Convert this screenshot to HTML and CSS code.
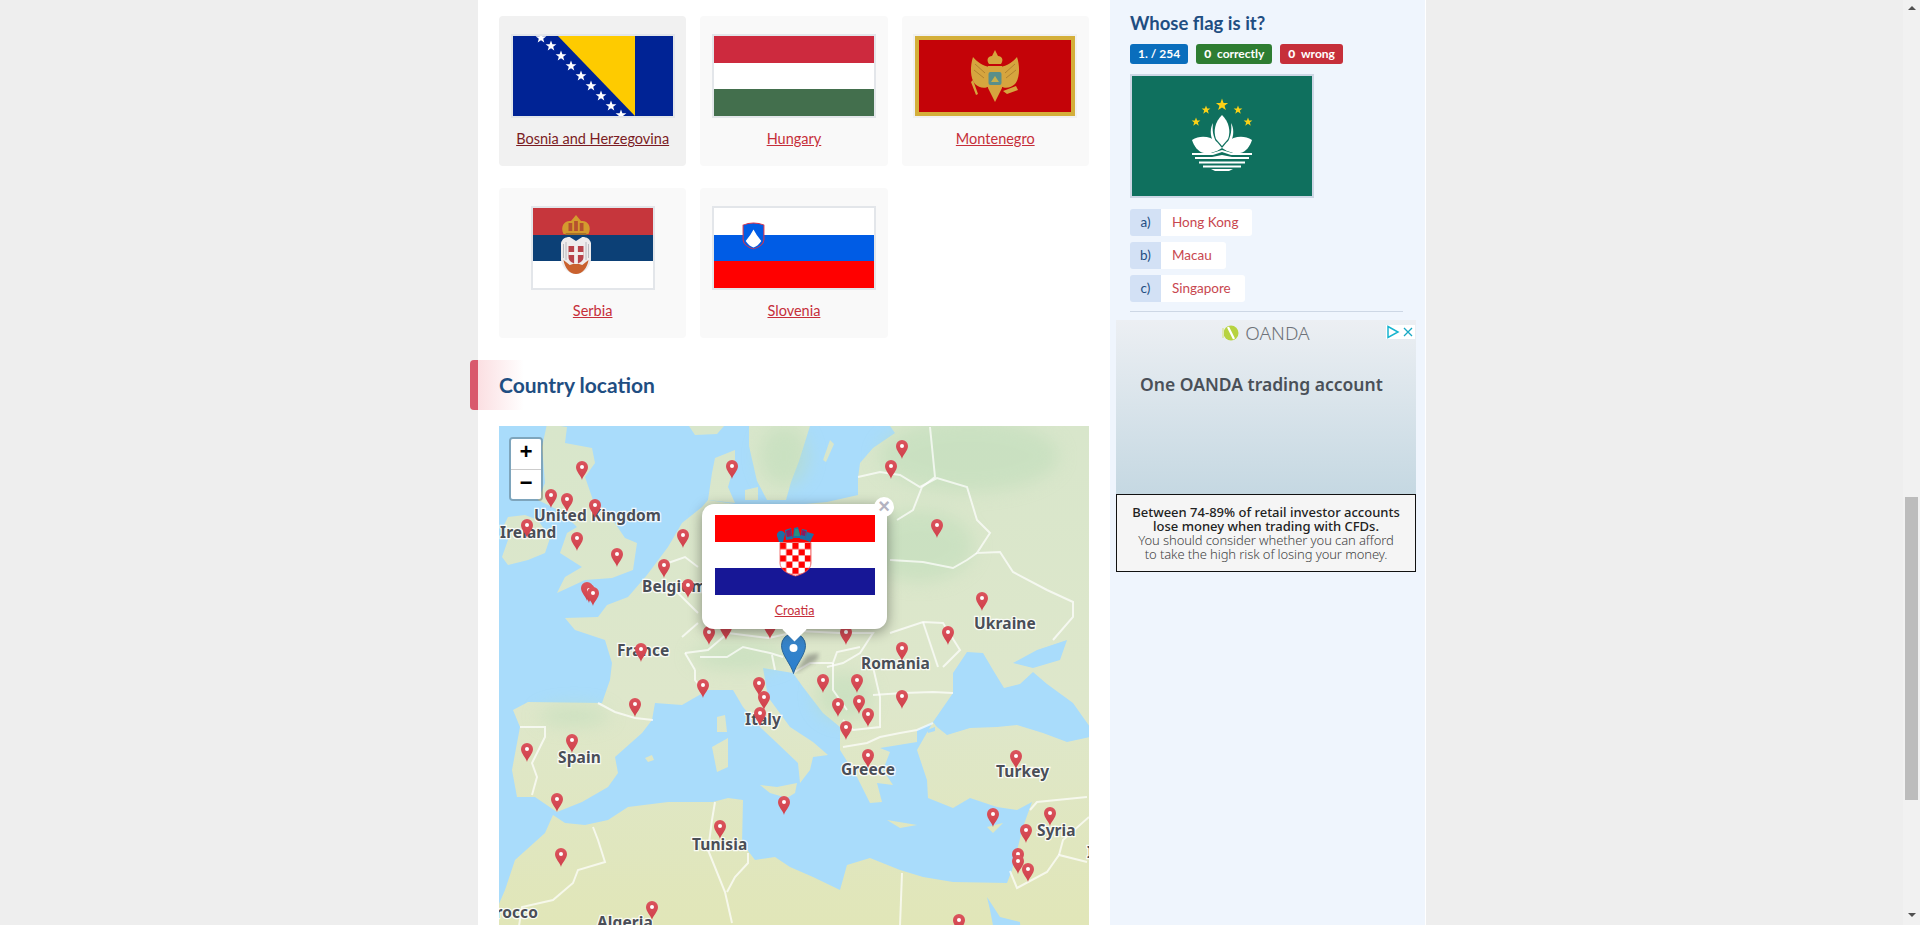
FILE: index.html
```html
<!DOCTYPE html>
<html lang="en">
<head>
  <meta charset="UTF-8" />
  <title>Countries of Southern Europe</title>
  <link rel="stylesheet" href="styles.css">
</head>
<body>
  <div class="page">
    <div class="wrap">
      <main class="content">
        <div class="flag-grid">
          <div class="flag-card hover">
            <svg class="flag" width="160" height="80" viewBox="0 0 160 80">
              <defs>
                <path id="star" d="M0-5.600 1.400-1.800 5.400-1.700 2.200.7 3.300 4.600 0 2.300-3.300 4.600-2.200.7-5.400-1.700-1.400-1.800Z" fill="#fff"/>
              </defs>
              <rect width="160" height="80" fill="#002395"/>
              <path d="M45 0H122V80Z" fill="#fecb00"/>
              <use href="#star" x="28" y="2"/><use href="#star" x="38" y="10"/><use href="#star" x="48" y="20"/>
              <use href="#star" x="58" y="30"/><use href="#star" x="68" y="40"/><use href="#star" x="78" y="50"/>
              <use href="#star" x="88" y="60"/><use href="#star" x="98" y="70"/><use href="#star" x="108" y="79"/>
            </svg>
            <a href="#">Bosnia and Herzegovina</a>
          </div>
          <div class="flag-card">
            <svg class="flag" width="160" height="80" viewBox="0 0 160 80">
              <rect width="160" height="27" fill="#cd2a3e"/>
              <rect y="27" width="160" height="26" fill="#fff"/>
              <rect y="53" width="160" height="27" fill="#436f4d"/>
            </svg>
            <a href="#">Hungary</a>
          </div>
          <div class="flag-card">
            <svg class="flag plain" width="160" height="80" viewBox="0 0 160 80">
              <rect width="160" height="80" fill="#d4af3a"/>
              <rect x="4" y="4" width="152" height="72" fill="#c40308"/>
              <g fill="#d6a53e">
                <path d="M75 31C68 30 62 26 58 21 55 30 55 42 60 48 64 52 70 53 75 50Z"/>
                <path d="M85 31C92 30 98 26 102 21 105 30 105 42 100 48 96 52 90 53 85 50Z"/>
                <path d="M73 30H87V52L80 66 73 52Z"/>
                <path d="M74 28C71 24 73 20 77 20L80 14 83 20C87 20 89 24 86 28Z"/>
                <path d="M58 44 63 58 61 59 56 46ZM88 55 101 50 103 54 92 58Z"/>
              </g>
              <path d="M60 28 70 37M59 34 69 42M100 28 90 37M101 34 91 42" stroke="#a8772a" stroke-width=".8"/>
              <rect x="73.500" y="36" width="13" height="13" rx="2" fill="#5a8f8a"/>
              <path d="M76 46 80 40 84 46Z" fill="#c9b04a"/>
            </svg>
            <a href="#">Montenegro</a>
          </div>
          <div class="flag-card">
            <svg class="flag" width="120" height="80" viewBox="0 0 120 80">
              <rect width="120" height="27" fill="#c6363c"/>
              <rect y="27" width="120" height="26" fill="#0c4076"/>
              <rect y="53" width="120" height="27" fill="#fff"/>
              <g transform="translate(-.75 0) scale(1.250 1)">
                <path d="M25 26C22 18 26 12 31 13L35 7 39 13C44 12 48 18 45 26Z" fill="#d49a2e"/>
                <path d="M29 15H32V23H29ZM33.500 13H36.500V23H33.500ZM38 15H41V23H38Z" fill="#b5502f"/>
                <path d="M27 25H43L44 27H26Z" fill="#a8702a"/>
                <path d="M30 29C26 29 24 31 23 35V52C24 60 29 66 35 66 41 66 46 60 47 52V35C46 31 44 29 40 29L35 33Z" fill="#eeecec"/>
                <path d="M25 36V50M27 34V52M45 36V50M43 34V52" stroke="#b3b4ba" stroke-width=".8"/>
                <path d="M25 52C26 60 30 66 35 66 40 66 44 60 45 52L40 57 35 55 30 57Z" fill="#c9612e"/>
                <path d="M29 38H41V49C41 53 38 55 35 56 32 55 29 53 29 49Z" fill="#b8434a"/>
                <path d="M33.500 38H36.500V56H33.500ZM29 44H41V47H29Z" fill="#f1efee"/>
              </g>
            </svg>
            <a href="#">Serbia</a>
          </div>
          <div class="flag-card">
            <svg class="flag" width="160" height="80" viewBox="0 0 160 80">
              <rect width="160" height="27" fill="#fff"/>
              <rect y="27" width="160" height="26" fill="#005ce5"/>
              <rect y="53" width="160" height="27" fill="#f00"/>
              <g transform="translate(-2.750 0) scale(1.300 1)">
                <path d="M24.500 17Q32.500 13 40.500 17V32Q40 38 32.500 41 25 38 24.500 32Z" fill="#005ce5" stroke="#d8334a" stroke-width=".8"/>
                <path d="M26.500 33 30 27 32.500 21.500 35 27 38.500 33Q36 38 32.500 39.500 29 38 26.500 33Z" fill="#fff"/>
              </g>
            </svg>
            <a href="#">Slovenia</a>
          </div>
        </div>

        <h2 class="section-title">Country location</h2>

        <div class="map">
          <svg class="map-img" width="590" height="520" viewBox="0 0 590 520">
            <defs>
              <linearGradient id="land" gradientUnits="userSpaceOnUse" x1="0" y1="0" x2="0" y2="500">
                <stop offset="0" stop-color="#d8e6cb"/>
                <stop offset=".55" stop-color="#dee7cb"/>
                <stop offset="1" stop-color="#e1e6b8"/>
              </linearGradient>
              <linearGradient id="pin-red" x1="0" y1="0" x2="0" y2="1">
                <stop offset="0" stop-color="#db545d"/>
                <stop offset="1" stop-color="#cf3f4a"/>
              </linearGradient>
              <filter id="soft"><feGaussianBlur stdDeviation="9"/></filter>
              <filter id="edge"><feGaussianBlur stdDeviation=".6"/></filter>
              <g id="pin">
                <path d="M6 19C5 14.500 0 11 0 6A6 6 0 0 1 12 6C12 11 7 14.500 6 19Z" fill="url(#pin-red)"/>
                <circle cx="6" cy="6" r="2" fill="#fff"/>
              </g>
            </defs>
            <rect width="590" height="520" fill="#a9dcfb"/>

            <g fill="url(#land)" filter="url(#edge)">
              <path d="M391 0 396 7 374 22 361 37 359 52 359 69 328 76 285 80 236 78 209 74 203 81 183 97 169 121 148 149 129 171 108 179 99 191 66 192 76 204 106 214 113 237 111 254 103 277 29 276 14 284 21 301 13 344 18 371 36 371 58 386 83 376 109 361 119 347 116 331 143 307 153 294 156 277 183 279 209 264 234 264 244 281 261 301 278 317 299 337 301 357 311 344 314 331 329 329 314 316 291 301 269 271 264 242 276 244 294 247 304 261 324 287 341 301 341 324 358 351 361 357 371 377 383 376 378 357 394 359 384 344 391 326 381 322 418 316 418 304 434 296 418 324 428 354 429 372 454 382 471 372 498 381 518 384 533 376 524 401 513 444 508 457 454 456 424 451 401 444 371 432 348 439 341 464 314 451 291 441 276 431 256 434 243 417 244 374 229 372 214 376 169 376 129 381 109 394 86 399 66 397 54 389 46 407 16 434 6 464 -4 487 -4 520 600 520 600 0Z"/>
              <path d="M68 1 66 17 93 22 96 37 86 51 94 74 109 87 126 112 138 117 134 144 113 152 86 154 58 167 66 151 83 141 61 127 68 107 78 101 63 86 39 74 46 57 43 21 48 -2Z"/>
              <path d="M9 91 26 89 39 94 51 112 46 127 29 134 9 139 3 131 9 114 4 101Z"/>
              <path d="M216 32 236 24 236 37 229 61 236 77 209 74 213 47Z"/>
              <path d="M246 64 259 61 259 74 246 74Z"/>
              <path d="M250 0 311 0 300 35 292 56 287 74 268 74 258 55 250 20Z"/>
              <path d="M190 0 225 0 218 8 196 9Z"/>
              <path d="M331 14 335 18 327 36 324 34Z"/>
              <path d="M261 359 278 361 298 357 296 367 288 372 271 367Z"/>
              <path d="M213 321 229 312 229 341 218 346Z"/>
              <path d="M218 291 226 289 228 306 218 306Z"/>
              <path d="M146 332 153 329 155 334 149 336Z"/>
              <path d="M388 394 418 399 401 402Z"/>
              <path d="M488 401 504 397 494 407Z"/>
            </g>

            <g fill="#bcdcb8" opacity=".5" filter="url(#soft)">
              <ellipse cx="470" cy="30" rx="90" ry="36"/>
              <ellipse cx="420" cy="120" rx="55" ry="36"/>
              <ellipse cx="285" cy="30" rx="24" ry="30"/>
              <ellipse cx="240" cy="230" rx="48" ry="14"/>
              <ellipse cx="345" cy="270" rx="28" ry="24"/>
              <ellipse cx="75" cy="290" rx="36" ry="10"/>
            </g>

            <g fill="#a9dcfb" filter="url(#edge)">
              <path d="M434 296 438 301 448 309 471 302 498 301 518 299 544 307 568 316 591 311 591 301 574 277 548 258 534 246 521 258 505 262 494 244 484 227 468 226 454 247 454 267Z"/>
              <path d="M514 237 538 224 568 214 561 234 534 242Z"/>
              <path d="M488 471 501 491 521 496 523 520 498 520 491 484Z"/>
              <path d="M428 304 436 301 436 305 429 307Z"/>
            </g>

            <g class="borders">
              <path d="M99 277 116 286 136 292 154 294"/>
              <path d="M21 301 46 301 46 311 33 337 38 351 33 369"/>
              <path d="M94 401 99 414 106 436 79 444 74 457 54 474 23 481 20 500"/>
              <path d="M216 376 213 394 209 424 226 466 233 497"/>
              <path d="M249 427 249 437 236 451 228 466"/>
              <path d="M403 447 401 500"/>
              <path d="M531 384 538 376 588 371"/>
              <path d="M511 445 518 462 548 446 560 429 588 436"/>
              <path d="M560 429 564 414 590 391"/>
              <path d="M431 1 436 51 423 61 414 84 398 94"/>
              <path d="M359 51 381 46 401 49 421 61 438 52 468 61 478 94 491 107 478 127 501 126 514 146 548 164 574 176 574 191 554 214"/>
              <path d="M391 134 424 136 454 142 468 134 478 127"/>
              <path d="M391 207 424 196 444 197 461 224 444 241"/>
              <path d="M424 196 439 241"/>
              <path d="M341 207 374 207 361 227 344 237 328 241"/>
              <path d="M201 231 228 231 244 221 271 227 284 231"/>
              <path d="M273 229 276 244"/>
              <path d="M294 247 311 237 334 237 338 226 361 221"/>
              <path d="M334 237 334 264 348 284"/>
              <path d="M374 241 381 271 381 301 354 304 344 294"/>
              <path d="M344 321 368 317 381 311 401 307 418 304 434 297"/>
              <path d="M374 269 404 267 434 266 454 267"/>
              <path d="M148 154 176 164 199 187"/>
              <path d="M183 211 199 197"/>
              <path d="M186 227 209 224 229 207"/>
              <path d="M169 137 186 131 199 141"/>
              <path d="M196 244 196 254 206 267"/>
              <path d="M186 227 196 244"/>
              <path d="M229 207 270 212 300 205 341 207"/>
              <path d="M300 205 294 247"/>
            </g>

            <g class="labels">
              <text x="35" y="95">United Kingdom</text>
              <text x="1" y="112">Ireland</text>
              <text x="143" y="166">Belgium</text>
              <text x="118" y="230">France</text>
              <text x="475" y="203">Ukraine</text>
              <text x="362" y="243">Romania</text>
              <text x="59" y="337">Spain</text>
              <text x="246" y="299">Italy</text>
              <text x="342" y="349">Greece</text>
              <text x="497" y="351">Turkey</text>
              <text x="538" y="410">Syria</text>
              <text x="588" y="432">Iraq</text>
              <text x="193" y="424">Tunisia</text>
              <text x="39" y="492" text-anchor="end">Morocco</text>
              <text x="98" y="502">Algeria</text>
            </g>

            <use href="#pin" x="77" y="35"/><use href="#pin" x="46" y="63"/><use href="#pin" x="62" y="67"/>
            <use href="#pin" x="90" y="73"/><use href="#pin" x="22" y="93"/><use href="#pin" x="72" y="106"/>
            <use href="#pin" x="112" y="122"/><use href="#pin" x="178" y="103"/><use href="#pin" x="159" y="133"/>
            <use href="#pin" x="183" y="153"/><use href="#pin" x="82" y="156"/><use href="#pin" x="84" y="158"/>
            <use href="#pin" x="88" y="161"/><use href="#pin" x="136" y="217"/><use href="#pin" x="227" y="34"/>
            <use href="#pin" x="204" y="200"/><use href="#pin" x="221" y="195"/><use href="#pin" x="265" y="194"/>
            <use href="#pin" x="397" y="14"/><use href="#pin" x="386" y="34"/><use href="#pin" x="432" y="93"/>
            <use href="#pin" x="477" y="166"/><use href="#pin" x="341" y="200"/><use href="#pin" x="443" y="200"/>
            <use href="#pin" x="397" y="216"/><use href="#pin" x="198" y="253"/><use href="#pin" x="254" y="251"/>
            <use href="#pin" x="259" y="265"/><use href="#pin" x="255" y="281"/><use href="#pin" x="318" y="248"/>
            <use href="#pin" x="352" y="248"/><use href="#pin" x="333" y="272"/><use href="#pin" x="354" y="269"/>
            <use href="#pin" x="363" y="282"/><use href="#pin" x="341" y="295"/><use href="#pin" x="363" y="323"/>
            <use href="#pin" x="22" y="317"/><use href="#pin" x="67" y="308"/><use href="#pin" x="130" y="272"/>
            <use href="#pin" x="52" y="367"/><use href="#pin" x="56" y="422"/><use href="#pin" x="215" y="394"/>
            <use href="#pin" x="279" y="370"/><use href="#pin" x="147" y="475"/><use href="#pin" x="397" y="264"/>
            <use href="#pin" x="511" y="324"/><use href="#pin" x="488" y="382"/><use href="#pin" x="545" y="381"/>
            <use href="#pin" x="521" y="398"/><use href="#pin" x="513" y="422"/><use href="#pin" x="513" y="429"/>
            <use href="#pin" x="523" y="437"/><use href="#pin" x="454" y="488"/>
          </svg>

          <div class="zoom-ctrl">
            <div class="zoom-btn">+</div>
            <div class="zoom-btn">&minus;</div>
          </div>

          <svg class="blue-pin" width="50" height="41" viewBox="0 0 50 41">
            <defs>
              <linearGradient id="pin-blue" x1="0" y1="0" x2="0" y2="1">
                <stop offset="0" stop-color="#3a85c6"/>
                <stop offset="1" stop-color="#2a7fd0"/>
              </linearGradient>
              <filter id="pin-shadow"><feGaussianBlur stdDeviation="2"/></filter>
            </defs>
            <path d="M13 41 26 22 38 20 36 27Z" fill="#4a4a4a" opacity=".4" filter="url(#pin-shadow)"/>
            <path d="M12.500 40.500C10 31 .5 22 .5 12.500A12 12 0 0 1 24.500 12.500C24.500 22 15 31 12.500 40.500Z" fill="url(#pin-blue)" stroke="#2b6596"/>
            <circle cx="12.500" cy="15" r="4" fill="#fff"/>
          </svg>

          <div class="popup">
            <svg class="popup-flag" width="160" height="80" viewBox="0 0 160 80">
              <defs>
                <pattern id="checks" x="65" y="28" width="12.400" height="12.400" patternUnits="userSpaceOnUse">
                  <rect width="12.400" height="12.400" fill="#fff"/>
                  <rect width="6.200" height="6.200" fill="#f00"/>
                  <rect x="6.200" y="6.200" width="6.200" height="6.200" fill="#f00"/>
                </pattern>
              </defs>
              <rect width="160" height="27" fill="#f00"/>
              <rect y="27" width="160" height="26" fill="#fff"/>
              <rect y="53" width="160" height="27" fill="#171796"/>
              <path d="M62 21A4 4 0 0 1 70 19L68 27H64ZM70 15 76 13 78 24 71 25ZM79 13 83 12 86 23 78 23ZM87 14 92 15 90 25 85 24ZM92 17 99 19 95 27 90 25Z" fill="#1c6fa6"/>
              <path d="M71 16 76 14 77 21 72 22ZM87 15 91 16 90 21 86 20Z" fill="#8e1b5d"/>
              <path d="M80 14 83 14 85 21 79 21Z" fill="#2a8f7d"/>
              <path d="M65 27.500H96V48C96 55 88 59 80.500 61 73 59 65 55 65 48Z" fill="url(#checks)" stroke="#e55" stroke-width=".8"/>
            </svg>
            <a href="#">Croatia</a>
            <span class="popup-close">&times;</span>
            <div class="popup-tip"></div>
          </div>
        </div>
      </main>

      <aside class="sidebar">
        <h3 class="quiz-title">Whose flag is it?</h3>
        <div class="badges">
          <span class="badge blue">1. / 254</span>
          <span class="badge green"><b>0</b> correctly</span>
          <span class="badge red"><b>0</b> wrong</span>
        </div>
        <svg class="quiz-flag" width="180" height="120" viewBox="0 0 180 120">
          <defs>
            <path id="ystar" d="M0-4 1-1.300 3.800-1.200 1.600.5 2.400 3.200 0 1.600-2.400 3.200-1.600.5-3.800-1.200-1-1.300Z" fill="#fbd116"/>
          </defs>
          <rect width="180" height="120" fill="#0f705e"/>
          <use href="#ystar" transform="translate(90 29) scale(1.600)"/>
          <use href="#ystar" transform="translate(74 34) scale(1.150)"/><use href="#ystar" transform="translate(106 34) scale(1.150)"/>
          <use href="#ystar" transform="translate(64 46) scale(1.150)"/><use href="#ystar" transform="translate(116 46) scale(1.150)"/>
          <g fill="#fff">
            <path d="M90 39C83 46 81 55 84 63L90 70 96 63C99 55 97 46 90 39Z"/>
            <path d="M81 47C78 52 78 60 81 65L85 68C81 60 80 54 81 47ZM99 47C102 52 102 60 99 65L95 68C99 60 100 54 99 47Z"/>
            <path d="M60 64C68 59 78 60 85 66L90 72C84 76 78 78 72 77 66 76 62 70 60 64Z"/>
            <path d="M120 64C112 59 102 60 95 66L90 72C96 76 102 78 108 77 114 76 118 70 120 64Z"/>
            <path d="M60 77H80L90 74 100 77H120V79H99L90 76 81 79H60Z"/>
            <path d="M63 81H80L90 79 100 81H117V83H63Z"/>
            <path d="M67 85.500H113V87.500H67Z"/>
            <path d="M71 89.500H109V91.500H71Z"/>
            <path d="M79 93H101L97 95H83Z"/>
          </g>
        </svg>
        <div class="answers">
          <div class="answer"><span class="answer-key">a)</span><a class="answer-text" href="#">Hong Kong</a></div>
          <div class="answer"><span class="answer-key">b)</span><a class="answer-text" href="#">Macau</a></div>
          <div class="answer"><span class="answer-key">c)</span><a class="answer-text" href="#">Singapore</a></div>
        </div>
        <hr class="rule">
        <div class="ad">
          <div class="ad-top">
            <div class="ad-logo">
              <svg width="17" height="16" viewBox="0 0 17 16">
                <circle cx="9" cy="8" r="7.500" fill="#b7d340"/>
                <path d="M1 3V13" stroke="#dfe8b5" stroke-width="2"/>
                <path d="M6 2 12 14" stroke="#fff" stroke-width="2.200"/>
              </svg>
              <span>OANDA</span>
            </div>
            <div class="ad-head">One OANDA trading account</div>
            <div class="ad-choices">
              <svg width="14" height="14" viewBox="0 0 14 14"><path d="M2 1.500 12 7 2 12.500Z" fill="none" stroke="#18b4cf" stroke-width="1.500"/></svg>
              <svg width="14" height="14" viewBox="0 0 14 14"><path d="M3 3 11 11M11 3 3 11" stroke="#18a8c4" stroke-width="1.300"/></svg>
            </div>
          </div>
          <div class="ad-warning">
            <strong>Between 74-89% of retail investor accounts<br>lose money when trading with CFDs.</strong><br>
            You should consider whether you can afford<br>to take the high risk of losing your money.
          </div>
        </div>
      </aside>
    </div>
  </div>
  <div class="scrollbar">
    <div class="arrow up"></div>
    <div class="thumb"></div>
    <div class="arrow down"></div>
  </div>
</body>
</html>
```

FILE: styles.css
```css
body {
  margin: 0;
  height: 925px;
  overflow: hidden;
  display: flex;
  background-color: #eee;
  font-family: "Lato", "Noto Sans", sans-serif;
  color: #333;
}

a {
  color: #c62f3a;
}

.page {
  flex: 1;
}

.wrap {
  display: flex;
  width: 948px;
  height: 925px;
  margin-left: 478px;
  background-color: #fff;
}

.content {
  width: 632px;
  box-sizing: border-box;
  padding: 16px 21px 0;
}

.flag-grid {
  display: grid;
  grid-template-columns: repeat(3, 187.300px);
  gap: 22.500px 14px;
}

.flag-card {
  height: 149.500px;
  box-sizing: border-box;
  padding-top: 18px;
  background-color: #f9f9f9;
  border-radius: 4px;
  text-align: center;
  font-size: 14.500px;
}

.flag-card.hover {
  background-color: #f1f1f1;
}

.flag-card.hover a {
  color: #7b1c24;
}

.flag-card a {
  display: block;
  margin-top: 10px;
  line-height: 22px;
}

.flag {
  display: block;
  margin: 0 auto;
  border: 2px solid #e3e6ea;
}

.flag.plain {
  border-color: #f1f1f1;
}

.section-title {
  height: 50px;
  margin: 22.500px 0 16px -29px;
  padding-left: 21px;
  border-left: 8px solid #d9596c;
  border-radius: 4px 0 0 4px;
  background: linear-gradient(to right, #fbdfe2, #fff 46px);
  color: #1f4e82;
  font-size: 21px;
  font-weight: 700;
  line-height: 50px;
}

.map {
  position: relative;
  width: 590px;
  height: 520px;
  overflow: hidden;
}

.map-img {
  display: block;
}

.borders path {
  fill: none;
  stroke: #fff;
  stroke-width: 2;
  stroke-opacity: .7;
}

.labels text {
  font-family: "Noto Sans", sans-serif;
  font-size: 15.500px;
  font-weight: 700;
  letter-spacing: .1px;
  fill: #4a4e57;
  stroke: #fff;
  stroke-width: 2.500px;
  stroke-opacity: .85;
  paint-order: stroke;
}

.zoom-ctrl {
  position: absolute;
  top: 11px;
  left: 10px;
  width: 30px;
  border: 2px solid rgba(0,0,0,0.25);
  border-radius: 4px;
  background-clip: padding-box;
}

.zoom-btn {
  height: 30px;
  background-color: #fff;
  border-bottom: 1px solid #ccc;
  color: #000;
  font: bold 22px/30px "Liberation Mono", monospace;
  text-align: center;
}

.zoom-btn:first-child {
  border-radius: 2px 2px 0 0;
}

.zoom-btn:last-child {
  height: 29px;
  border-bottom: none;
  border-radius: 0 0 2px 2px;
}

.blue-pin {
  position: absolute;
  left: 282px;
  top: 207px;
}

.popup {
  position: absolute;
  left: 203px;
  top: 78px;
  width: 185px;
  height: 125px;
  box-sizing: border-box;
  padding-top: 11px;
  background-color: #fff;
  border-radius: 12px;
  box-shadow: 0 3px 14px rgba(0,0,0,0.4);
  text-align: center;
  font-size: 12.500px;
}

.popup a {
  display: block;
  margin-top: 7px;
  line-height: 18px;
  position: relative;
  z-index: 1;
}

.popup-flag {
  display: block;
  margin: 0 auto;
}

.popup-close {
  position: absolute;
  top: -7px;
  right: -7px;
  width: 20px;
  height: 20px;
  background-color: #fff;
  border-radius: 50%;
  color: #b3b3c0;
  font: bold 20px/19px "Liberation Sans", sans-serif;
}

.popup-tip {
  position: absolute;
  left: 84px;
  bottom: -9px;
  width: 17px;
  height: 17px;
  background-color: #fff;
  transform: rotate(45deg);
}

.sidebar {
  width: 315px;
  box-sizing: border-box;
  padding: 10px 22px 0 20px;
  background-color: #eff5fd;
}

.quiz-title {
  margin: 0;
  color: #1f4e82;
  font-size: 18.500px;
  font-weight: 700;
  line-height: 26px;
}

.badges {
  display: flex;
  gap: 8px;
  margin-top: 8px;
}

.badge {
  height: 20px;
  padding: 0 8px;
  border-radius: 3px;
  color: #fff;
  font-size: 12px;
  font-weight: 700;
  line-height: 20px;
}

.badge b {
  margin-right: 3px;
}

.badge.blue {
  background-color: #0a6ebd;
}

.badge.green {
  background-color: #2e7d32;
}

.badge.red {
  background-color: #c62f3a;
}

.quiz-flag {
  display: block;
  margin-top: 10px;
  border: 2px solid #cdd7e5;
}

.answers {
  display: flex;
  flex-direction: column;
  gap: 6px;
  margin-top: 11px;
}

.answer {
  display: flex;
  height: 27px;
  align-items: stretch;
  font-size: 13.500px;
  line-height: 27px;
}

.answer-key {
  width: 31px;
  background-color: #d3e1f5;
  border-radius: 3px 0 0 3px;
  color: #1f4e82;
  text-align: center;
}

.answer-text {
  padding: 0 14px 0 11px;
  background-color: #fff;
  border-radius: 0 3px 3px 0;
  color: #c8474f;
  text-decoration: none;
}

.rule {
  height: 1px;
  margin: 9px 0 8px;
  border: none;
  background-color: #cdd7e5;
}

.ad {
  width: 300px;
  margin-left: -14px;
  font-family: "Noto Sans", sans-serif;
}

.ad-top {
  position: relative;
  height: 174px;
  box-sizing: border-box;
  background: linear-gradient(to bottom, #eceff3, #c5d8e2);
}

.ad-logo {
  display: flex;
  justify-content: center;
  align-items: center;
  gap: 6px;
  color: #6d7278;
  font-size: 19px;
  font-weight: 300;
}

.ad-head {
  margin-top: 26px;
  margin-left: 24px;
  color: #4a5058;
  font-size: 17.500px;
  font-weight: 600;
}

.ad-choices {
  position: absolute;
  top: 5px;
  right: 1px;
  display: flex;
  gap: 1px;
  background-color: #fff;
}

.ad-warning {
  height: 78px;
  box-sizing: border-box;
  padding-top: 10px;
  border: 1px solid #111;
  background-color: #f5f5f5;
  color: #444;
  font-size: 13px;
  font-weight: 300;
  letter-spacing: -.1px;
  line-height: 14px;
  text-align: center;
}

.ad-warning strong {
  color: #222;
  font-weight: 500;
  letter-spacing: 0;
}

.scrollbar {
  width: 17px;
  height: 925px;
  background-color: #f1f1f1;
  display: flex;
  flex-direction: column;
  align-items: center;
}

.thumb {
  width: 13px;
  height: 303px;
  margin-top: 487px;
  background-color: #bcbcbc;
}

.arrow {
  width: 0;
  height: 0;
  border-left: 4px solid transparent;
  border-right: 4px solid transparent;
}

.arrow.up {
  margin-top: 6px;
  border-bottom: 4px solid #505050;
}

.arrow.down {
  margin-top: 113px;
  border-top: 4px solid #505050;
}
```
